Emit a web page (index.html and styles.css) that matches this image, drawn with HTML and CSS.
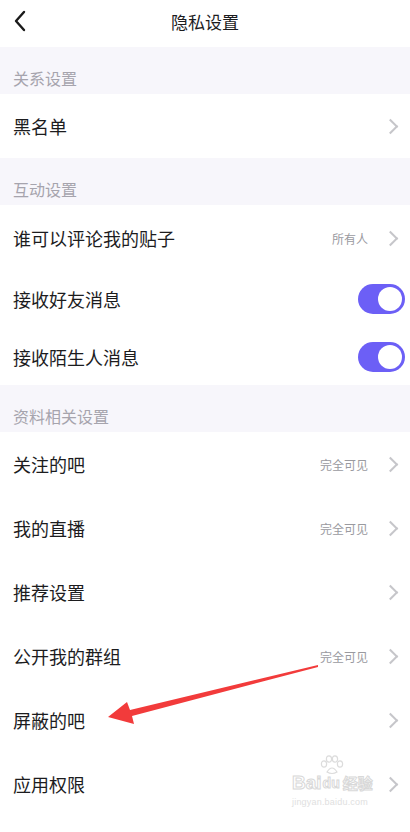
FILE: index.html
```html
<!DOCTYPE html>
<html lang="zh-CN">
<head>
    <meta charset="UTF-8">
    <meta name="viewport" content="width=device-width, initial-scale=1.0">
    <title>隐私设置</title>
    <link rel="stylesheet" href="styles.css">
</head>
<body>
    <div class="page">
        <header class="topbar">
            <svg class="back" width="14" height="22" viewBox="0 0 14 22">
                <path d="M11 2 L3 11 L11 20" fill="none" stroke="#1a1a1a" stroke-width="2.4" stroke-linecap="round" stroke-linejoin="round"/>
            </svg>
            <h1>隐私设置</h1>
        </header>

        <div class="section-title">关系设置</div>
        <div class="row">
            <span class="label">黑名单</span>
            <span class="more"><i class="chevron"></i></span>
        </div>

        <div class="section-title">互动设置</div>
        <div class="row row-first">
            <span class="label">谁可以评论我的贴子</span>
            <span class="more"><span class="value">所有人</span><i class="chevron"></i></span>
        </div>
        <div class="row row-mid">
            <span class="label">接收好友消息</span>
            <span class="toggle on"><span class="knob"></span></span>
        </div>
        <div class="row row-last">
            <span class="label">接收陌生人消息</span>
            <span class="toggle on"><span class="knob"></span></span>
        </div>

        <div class="section-title">资料相关设置</div>
        <div class="row">
            <span class="label">关注的吧</span>
            <span class="more"><span class="value">完全可见</span><i class="chevron"></i></span>
        </div>
        <div class="row">
            <span class="label">我的直播</span>
            <span class="more"><span class="value">完全可见</span><i class="chevron"></i></span>
        </div>
        <div class="row">
            <span class="label">推荐设置</span>
            <span class="more"><i class="chevron"></i></span>
        </div>
        <div class="row">
            <span class="label">公开我的群组</span>
            <span class="more"><span class="value">完全可见</span><i class="chevron"></i></span>
        </div>
        <div class="row">
            <span class="label">屏蔽的吧</span>
            <span class="more"><i class="chevron"></i></span>
        </div>
        <div class="row">
            <span class="label">应用权限</span>
            <span class="more"><i class="chevron"></i></span>
        </div>

        <!-- red annotation arrow drawn over the list -->
        <svg class="arrow" width="410" height="832" viewBox="0 0 410 832">
            <polygon points="318,665 130,710 127,702 108,717 134,724 132,716 318,667" fill="#f23b3b"/>
        </svg>

        <div class="watermark">
            <div class="wm-logo">
                <span class="wm-bai">Bai</span>
                <span class="wm-du">
                    <svg class="paw" width="26" height="20" viewBox="0 0 26 20">
                        <g fill="none" stroke="#dcdcdc" stroke-width="1.2">
                            <ellipse cx="5" cy="9" rx="2.6" ry="3.2"/>
                            <ellipse cx="10" cy="4" rx="2.6" ry="3.2"/>
                            <ellipse cx="16" cy="4" rx="2.6" ry="3.2"/>
                            <ellipse cx="21" cy="9" rx="2.6" ry="3.2"/>
                            <path d="M8 17 Q13 9 18 17 Q13 20 8 17 Z"/>
                        </g>
                    </svg>
                    du
                </span>
                <span class="wm-jy">经验</span>
            </div>
            <div class="wm-url">jingyan.baidu.com</div>
        </div>
    </div>
</body>
</html>
```

FILE: styles.css
```css
body {
    margin: 0;
    background-color: #ffffff;
    font-family: "Noto Sans CJK SC", "Noto Sans", sans-serif;
    color: #1c1c1e;
}

.page {
    position: relative;
    width: 410px;
    height: 832px;
    overflow: hidden;
    display: flex;
    flex-direction: column;
}

.topbar {
    height: 47px;
    display: flex;
    align-items: center;
    justify-content: center;
    position: relative;
}

.topbar h1 {
    margin: 0;
    font-size: 17px;
    font-weight: normal;
    color: #1c1c1e;
    line-height: 22px;
    margin-top: -4px;
}

.back {
    position: absolute;
    left: 13px;
    top: 10px;
}

.section-title {
    height: 47px;
    box-sizing: border-box;
    padding: 20px 0 0 13px;
    background-color: #f7f6fb;
    font-size: 16px;
    line-height: 22px;
    color: #a6a4ad;
}

.row {
    height: 64px;
    display: flex;
    align-items: center;
    justify-content: space-between;
    padding: 0 10px 0 13px;
}

.row-first {
    height: 64px;
    padding-top: 2px;
    box-sizing: border-box;
}

.row-mid {
    height: 60px;
}

.row-last {
    height: 56px;
}

.label {
    font-size: 18px;
    line-height: 24px;
}

.more {
    display: flex;
    align-items: center;
    gap: 17px;
}

.value {
    font-size: 12px;
    color: #9a9a9f;
}

.chevron {
    display: block;
    width: 11px;
    height: 11px;
    box-sizing: border-box;
    border-top: 2px solid #c6c6ca;
    border-right: 2px solid #c6c6ca;
    transform: rotate(45deg);
    margin-right: 4px;
}

.toggle {
    width: 47px;
    height: 30px;
    border-radius: 15px;
    background-color: #6c5ff6;
    position: relative;
    margin-right: -5px;
}

.toggle .knob {
    position: absolute;
    right: 3px;
    top: 3px;
    width: 24px;
    height: 24px;
    border-radius: 50%;
    background-color: #ffffff;
}

.arrow {
    position: absolute;
    left: 0;
    top: 0;
    pointer-events: none;
}

.watermark {
    position: absolute;
    left: 292px;
    top: 773px;
    color: #e2e2e2;
    font-family: "Liberation Sans", sans-serif;
}

.wm-logo {
    display: flex;
    align-items: flex-end;
    gap: 1px;
}

.wm-bai, .wm-du {
    font-size: 19px;
    font-weight: bold;
    line-height: 20px;
    color: #ffffff;
    -webkit-text-stroke: 1px #d8d8d8;
}

.wm-du {
    position: relative;
    font-size: 14px;
}

.paw {
    position: absolute;
    left: -4px;
    top: -18px;
}

.wm-jy {
    font-family: "Noto Sans CJK SC", sans-serif;
    font-size: 15px;
    line-height: 20px;
    font-weight: bold;
    color: #ffffff;
    -webkit-text-stroke: 1px #d8d8d8;
    margin-left: 2px;
}

.wm-url {
    font-size: 9px;
    color: #e0e0e0;
    margin-top: 4px;
    letter-spacing: 0.2px;
}
```
